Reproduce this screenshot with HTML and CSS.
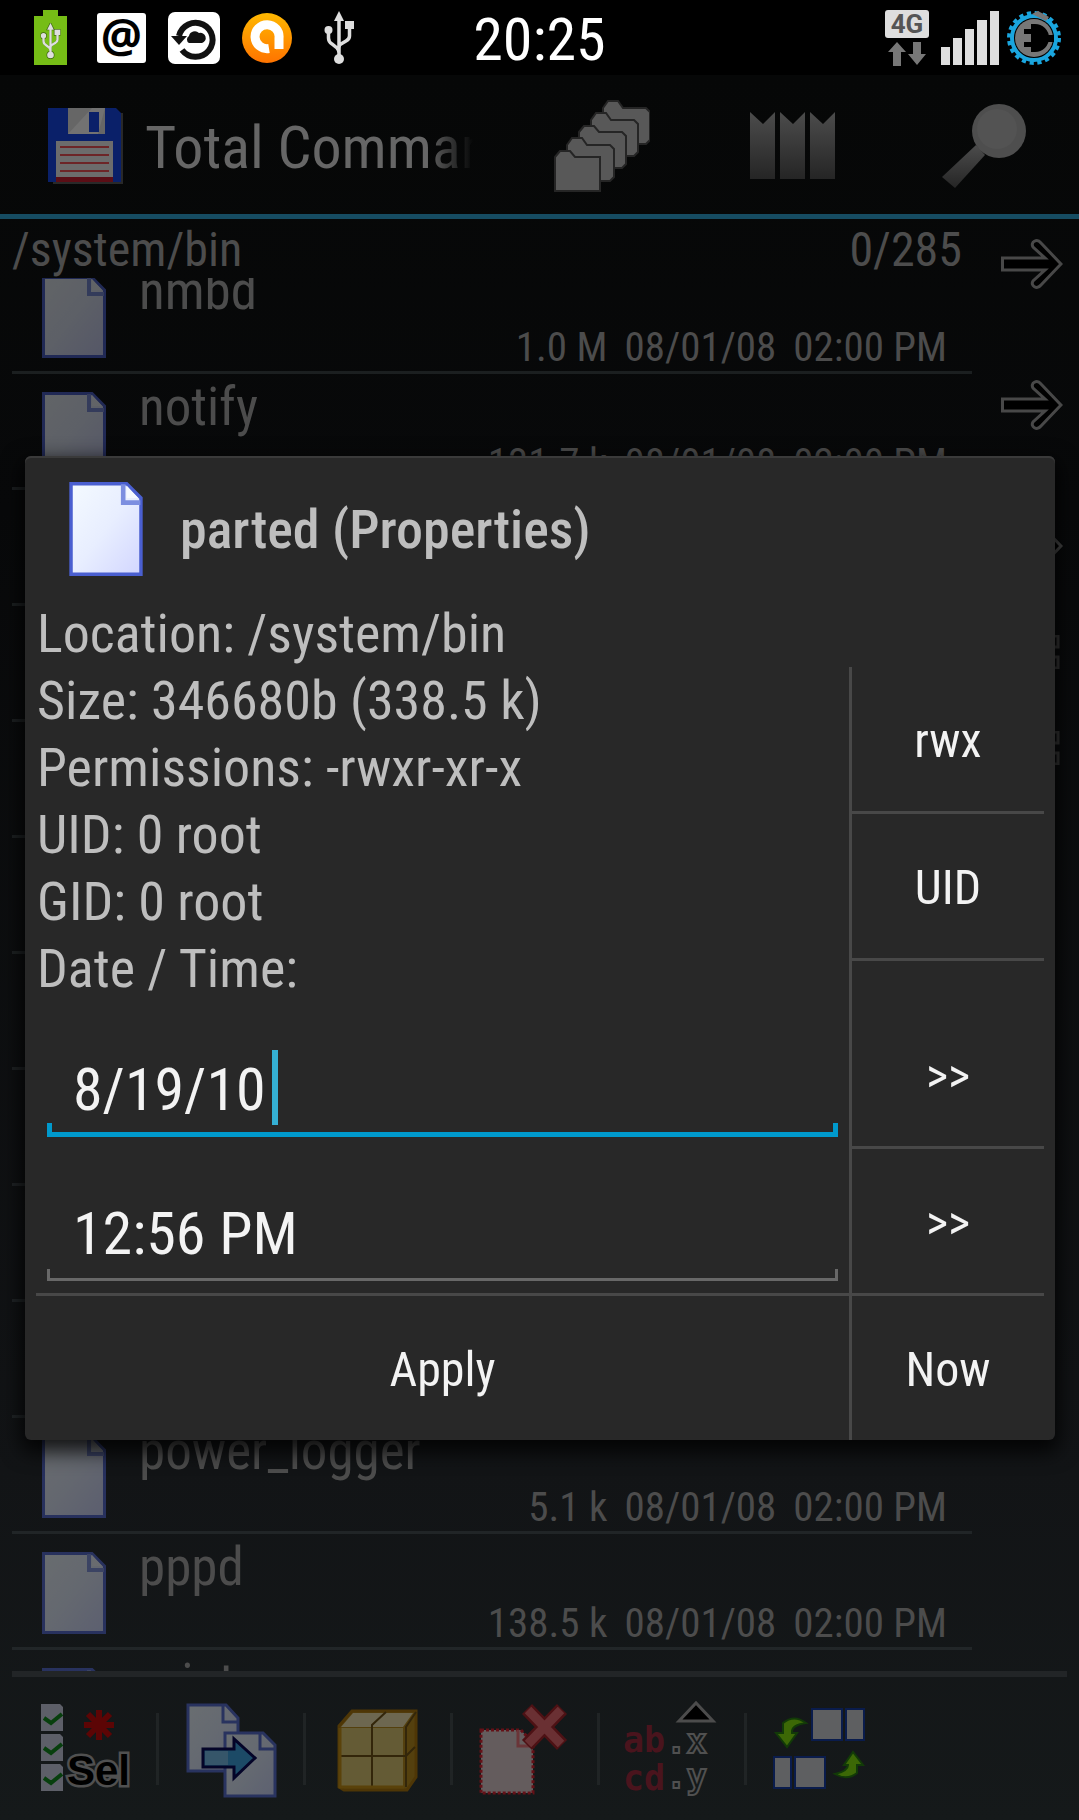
FILE: index.html
```html
<!DOCTYPE html>
<html lang="en">
<head>
    <meta charset="UTF-8">
    <meta name="viewport" content="width=device-width, initial-scale=1.0">
    <title>Total Commander</title>
    <link rel="stylesheet" href="styles.css">
</head>
<body>
    <svg class="defs" aria-hidden="true">
        <defs>
            <linearGradient id="paper" x1="0" y1="0" x2="1" y2="1">
                <stop offset="0" stop-color="#f4faff"/>
                <stop offset="0.5" stop-color="#e8eeff"/>
                <stop offset="1" stop-color="#d2d6ff"/>
            </linearGradient>
            <linearGradient id="metal" x1="0" y1="0" x2="0" y2="1">
                <stop offset="0" stop-color="#4c4c4c"/>
                <stop offset="1" stop-color="#252525"/>
            </linearGradient>
            <linearGradient id="avast" x1="0" y1="0" x2="0" y2="1">
                <stop offset="0" stop-color="#ffb800"/>
                <stop offset="1" stop-color="#ff7300"/>
            </linearGradient>
            <symbol id="file" viewBox="0 0 64 82">
                <path d="M1.5 1.5H50L62.500 14V80.500H1.500Z" fill="url(#paper)" stroke="#4a5fd0" stroke-width="3"/>
                <path d="M47 2V18H62" fill="none" stroke="#7c8ee0" stroke-width="4"/>
                <path d="M50 3V14H60Z" fill="#f4f8ff"/>
            </symbol>
            <symbol id="arrow" viewBox="0 0 62 50">
                <path d="M1.500 19H44L32 8C29 3 36-1 40 4L60 25L40 46C36 51 29 47 32 42L44 31H1.500Z" fill="#000" stroke="#484848" stroke-width="3"/>
            </symbol>
            <symbol id="usb" viewBox="0 0 30 54">
                <path d="M15 8V46M4.500 20V27Q4.500 31 8 33L13 37Q15 39 15 42M25.500 14V25Q25.500 28 22 30L17 33Q15 34 15 37" fill="none" stroke="currentColor" stroke-width="3.500"/>
                <path d="M15 0L20 10H10Z" fill="currentColor"/>
                <circle cx="4.500" cy="19" r="4" fill="currentColor"/>
                <rect x="21" y="10" width="9" height="8" fill="currentColor"/>
                <circle cx="15" cy="48" r="5" fill="currentColor"/>
            </symbol>
        </defs>
    </svg>

    <header class="status-bar">
        <div class="status-left">
            <svg class="battery" viewBox="0 0 33 55">
                <path d="M0 6H9V0H24V6H33V55H0Z" fill="#76bd16"/>
                <use href="#usb" x="6.500" y="13" width="20" height="36" color="#3c6410" stroke="#3c6410" stroke-width="2"/>
                <use href="#usb" x="6.500" y="13" width="20" height="36" color="#dedede"/>
            </svg>
            <div class="at-badge">@</div>
            <svg class="sync" viewBox="0 0 52 52">
                <rect width="52" height="52" rx="7" fill="#fff"/>
                <path d="M11 24A17 17 0 1 1 14 38" fill="none" stroke="#111" stroke-width="6"/>
                <path d="M3 24H19L11 33Z" fill="#111"/>
                <path d="M21 31A4 4 0 0 1 21 24A6 6 0 0 1 31 21A5 5 0 0 1 34 31Z" fill="#111"/>
            </svg>
            <svg class="avast" viewBox="0 0 50 50">
                <circle cx="25" cy="25" r="25" fill="url(#avast)"/>
                <path d="M27 35.500A12 12 0 1 1 37 25V36" fill="none" stroke="#fff" stroke-width="9"/>
            </svg>
            <svg class="usb" viewBox="0 0 30 54"><use href="#usb"/></svg>
        </div>
        <time class="clock">20:25</time>
        <div class="status-right">
            <div class="network">
                <span class="network-type">4G</span>
                <svg viewBox="0 0 38 24" width="38" height="24">
                    <path d="M9 0L18 10H13V24H5V10H0ZM29 23L20 12H25V0H33V12H38Z" fill="#777"/>
                </svg>
            </div>
            <svg class="signal" viewBox="0 0 58 54">
                <path d="M0 36H9V54H0ZM12 27H21V54H12ZM24 18H33V54H24ZM36 9H46V54H36ZM49 0H58V54H49Z" fill="#dedede"/>
            </svg>
            <svg class="gear" viewBox="0 0 54 54">
                <circle cx="27" cy="27" r="22" fill="none" stroke="#1aa5de" stroke-width="4"/>
                <circle cx="27" cy="27" r="25" fill="none" stroke="#1aa5de" stroke-width="4" stroke-dasharray="4.200 3.650"/>
                <path d="M25 3L31 0L42 6L39 10Z" fill="#777"/>
                <circle cx="27" cy="27" r="19" fill="#777"/>
                <path d="M24 13H28A14 14 0 0 1 28 41H24V36H17V31H24V23H17V18H24Z" fill="#000"/>
                <path d="M36 24H47V31H36Z" fill="#000"/>
            </svg>
        </div>
    </header>

    <div class="app">
        <div class="action-bar">
            <svg class="logo" viewBox="0 0 75 76">
                <path d="M5 5H75V76H5Z" fill="#292929"/>
                <path d="M0 0H68L73 5V74H0Z" fill="#0a2069"/>
                <path d="M20 0H57V26H20Z" fill="#666"/>
                <path d="M20 26L44 0H57L50 26Z" fill="#727272"/>
                <path d="M41 4H51V24H41Z" fill="#0a2069"/>
                <path d="M8 33H65V74H8Z" fill="#6c6c6c"/>
                <path d="M12 39H61M12 47H61M12 55H61M12 63H61" stroke="#6d2527" stroke-width="2"/>
                <path d="M8 69H65V74H8Z" fill="#5b0e16"/>
            </svg>
            <h1 class="app-title">Total Commander</h1>
            <button class="action" aria-label="Folders">
                <svg viewBox="0 0 96 92" width="96" height="92">
                    <g fill="#585858" stroke="#252525" stroke-width="2">
                        <path d="M49 8L54 1H64L69 8H92L96 12V40L92 44H49Z"/>
                        <path d="M37 20L42 13H52L57 20H80L84 24V52L80 56H37Z"/>
                        <path d="M25 32L30 26H40L45 32H68L72 36V64L68 68H25Z"/>
                        <path d="M13 45L18 38H28L33 45H56L60 49V77L56 81H13Z"/>
                        <path d="M1 57L6 51H16L21 57H46V91H1Z"/>
                    </g>
                </svg>
            </button>
            <button class="action" aria-label="Bookmarks">
                <svg viewBox="0 0 88 68" width="88" height="68">
                    <path d="M1 0L14 12L26 0V67H1ZM31 0L44 12L56 0V67H31ZM61 0L74 12L86 0V67H61Z" fill="url(#metal)"/>
                </svg>
            </button>
            <button class="action" aria-label="Search">
                <svg viewBox="0 0 86 86" width="86" height="86">
                    <path d="M35 42L44 52L14 85L1 74Z" fill="url(#metal)"/>
                    <circle cx="58" cy="28" r="27" fill="#4e4e4e"/>
                    <circle cx="56" cy="26" r="20" fill="#535353"/>
                </svg>
            </button>
        </div>

        <div class="browser">
            <main class="panel">
                <div class="path-bar"><span>/system/bin</span><span>0/285</span></div>
                <ul class="file-list">
                    <li class="file-row">
                        <svg class="file-icon"><use href="#file"/></svg>
                        <div class="file-text">
                            <div class="file-name">nmbd</div>
                            <div class="file-meta"><span>1.0 M</span><span>08/01/08</span><span>02:00 PM</span></div>
                        </div>
                    </li>
                    <li class="file-row">
                        <svg class="file-icon"><use href="#file"/></svg>
                        <div class="file-text">
                            <div class="file-name">notify</div>
                            <div class="file-meta"><span>131.7 k</span><span>08/01/08</span><span>02:00 PM</span></div>
                        </div>
                    </li>
                    <li class="file-row"></li>
                    <li class="file-row"></li>
                    <li class="file-row"></li>
                    <li class="file-row"></li>
                    <li class="file-row"></li>
                    <li class="file-row"></li>
                    <li class="file-row"></li>
                    <li class="file-row"></li>
                    <li class="file-row">
                        <svg class="file-icon"><use href="#file"/></svg>
                        <div class="file-text">
                            <div class="file-name">power_logger</div>
                            <div class="file-meta"><span>5.1 k</span><span>08/01/08</span><span>02:00 PM</span></div>
                        </div>
                    </li>
                    <li class="file-row">
                        <svg class="file-icon"><use href="#file"/></svg>
                        <div class="file-text">
                            <div class="file-name">pppd</div>
                            <div class="file-meta"><span>138.5 k</span><span>08/01/08</span><span>02:00 PM</span></div>
                        </div>
                    </li>
                    <li class="file-row">
                        <svg class="file-icon"><use href="#file"/></svg>
                        <div class="file-text">
                            <div class="file-name">print</div>
                        </div>
                    </li>
                </ul>
            </main>
            <nav class="side-bar">
                <button class="side-button" aria-label="Right panel"><svg class="side-arrow"><use href="#arrow"/></svg></button>
                <button class="side-button" aria-label="Copy right"><svg class="side-arrow"><use href="#arrow"/></svg></button>
                <button class="side-button" aria-label="Move right"><svg class="side-arrow"><use href="#arrow"/></svg></button>
                <div class="side-group">
                    <button class="side-button small" aria-label="List"><svg viewBox="0 0 56 34" width="56" height="34"><path d="M1 1H54V12H1ZM1 22H54V33H1Z" fill="none" stroke="#363636" stroke-width="3"/></svg></button>
                    <button class="side-button small" aria-label="Details"><svg viewBox="0 0 56 34" width="56" height="34"><path d="M1 1H54V12H1ZM1 22H54V33H1Z" fill="none" stroke="#363636" stroke-width="3"/></svg></button>
                </div>
            </nav>
        </div>

        <div class="toolbar">
            <button class="tool" aria-label="Select">
                <svg viewBox="0 0 96 96">
                    <g fill="#5d5f68">
                        <path d="M5 3H24L27 6V30H5ZM5 33H24L27 36V60H5ZM5 63H24L27 66V90H5Z"/>
                    </g>
                    <path d="M8 17L15 22L26 13M8 47L15 52L26 43M8 77L15 82L26 73" fill="none" stroke="#073f0d" stroke-width="4"/>
                    <path d="M63 9V39M48 24H78M52 13L74 35M74 13L52 35" stroke="#5c0505" stroke-width="6"/>
                    <text class="sel-text" x="31" y="84">Sel</text>
                </svg>
            </button>
            <button class="tool" aria-label="Copy">
                <svg viewBox="0 0 96 96">
                    <g opacity="0.38">
                        <path d="M5 4H43L55 17V70H5Z" fill="url(#paper)" stroke="#4a5fd0" stroke-width="3"/>
                        <path d="M40 4V21H54" fill="none" stroke="#4a5fd0" stroke-width="3"/>
                        <path d="M42 32H80L92 44V95H42Z" fill="url(#paper)" stroke="#4a5fd0" stroke-width="3"/>
                        <path d="M77 32V48H91" fill="none" stroke="#4a5fd0" stroke-width="3"/>
                    </g>
                    <path d="M20 48H51V38L72 57L51 77V66H20Z" fill="#1c4a66" stroke="#040428" stroke-width="3"/>
                    <path d="M22 50H45V64H22Z" fill="#36566a"/>
                </svg>
            </button>
            <button class="tool" aria-label="Pack">
                <svg viewBox="0 0 96 96">
                    <path d="M9 25L22 10H86V76L77 89H14L9 86Z" fill="#54400e" stroke="#4e3606" stroke-width="3"/>
                    <path d="M11 26L23 12H83L73 26Z" fill="#6d6750"/>
                    <path d="M10 27H73V86H10Z" fill="#645b35"/>
                    <path d="M42 87V24L56 11M9 55H76L85 46M76 86V26L86 11" fill="none" stroke="#33260a" stroke-width="2"/>
                    <path d="M10 27V86H74" fill="none" stroke="#5a420a" stroke-width="3"/>
                </svg>
            </button>
            <button class="tool" aria-label="Delete">
                <svg viewBox="0 0 96 96">
                    <path d="M4 29H44L56 42V92H4Z" fill="#645c5d" stroke="#641017" stroke-width="3" stroke-dasharray="3 2"/>
                    <path d="M41 29V45H56" fill="none" stroke="#6a3538" stroke-width="3"/>
                    <path d="M50 8L85 44M85 8L50 44" stroke="#4d1114" stroke-width="14"/>
                    <path d="M51 9L84 43M84 9L51 43" stroke="#6a3033" stroke-width="9"/>
                </svg>
            </button>
            <button class="tool" aria-label="Rename">
                <svg viewBox="0 0 96 96">
                    <path d="M55 20L72 2L89 20Z" fill="#000" stroke="#4c4c4c" stroke-width="3"/>
                    <text class="rename-text" x="-1" y="51">ab</text>
                    <text class="rename-text" x="-1" y="89">cd</text>
                    <text class="rename-ext" x="42" y="52">.x</text>
                    <text class="rename-ext" x="42" y="87">.y</text>
                </svg>
            </button>
            <button class="tool" aria-label="Swap panels">
                <svg viewBox="0 0 96 96">
                    <path d="M41 8H71V39H41ZM75 8H93V39H75ZM3 56H20V87H3ZM24 56H54V87H24Z" fill="#5e5f61" stroke="#0a1c4c" stroke-width="2"/>
                    <path d="M35 22Q23 13 12 22V32H5L16 46L26 32H21Q20 24 35 22Z" fill="#3c6806" stroke="#123a08" stroke-width="2"/>
                    <path d="M64 73Q76 80 86 72V64H92L82 51L73 64H77Q77 70 64 73Z" fill="#3c6806" stroke="#123a08" stroke-width="2"/>
                </svg>
            </button>
        </div>
    </div>

    <div class="overlay">
        <form class="dialog" role="dialog" aria-labelledby="dialog-title">
            <div class="dialog-header">
                <svg class="dialog-icon"><use href="#file"/></svg>
                <h2 id="dialog-title">parted (Properties)</h2>
            </div>
            <p class="info">Location: /system/bin</p>
            <div class="dialog-body">
                <div class="dialog-main">
                    <p class="info">Size: 346680b (338.5 k)</p>
                    <p class="info">Permissions: -rwxr-xr-x</p>
                    <p class="info">UID: 0 root</p>
                    <p class="info">GID: 0 root</p>
                    <label class="info" for="date">Date / Time:</label>
                    <div class="field active">
                        <input type="text" id="date" value="8/19/10">
                        <span class="caret"></span>
                    </div>
                    <div class="field">
                        <input type="text" id="time" aria-label="Time" value="12:56 PM">
                    </div>
                </div>
                <div class="dialog-side">
                    <button type="button">rwx</button>
                    <button type="button">UID</button>
                    <button type="button" class="tall">&gt;&gt;</button>
                    <button type="button">&gt;&gt;</button>
                </div>
            </div>
            <div class="dialog-footer">
                <button type="button" class="apply">Apply</button>
                <button type="button" class="now">Now</button>
            </div>
        </form>
    </div>
</body>
</html>
```

FILE: styles.css
```css
* {
    box-sizing: border-box;
}

body {
    margin: 0;
    height: 100vh;
    display: flex;
    flex-direction: column;
    overflow: hidden;
    background-color: #000;
    color: #4c4c4c;
    font-family: "Roboto Condensed", Roboto, sans-serif;
}

h1, h2, p, ul {
    margin: 0;
    padding: 0;
    font-weight: 400;
}

button {
    margin: 0;
    padding: 0;
    border: none;
    background: none;
    color: inherit;
    font-family: inherit;
    cursor: pointer;
}

svg {
    display: block;
    flex: none;
}

.defs {
    position: absolute;
    width: 0;
    height: 0;
}

/* status bar */
.status-bar {
    flex: none;
    height: 75px;
    display: grid;
    grid-template-columns: 1fr auto 1fr;
    align-items: center;
    padding: 0 18px;
}

.status-left,
.status-right {
    display: flex;
    align-items: center;
}

.status-left {
    gap: 22px;
    padding-left: 16px;
}

.status-right {
    justify-content: flex-end;
    gap: 8px;
}

.battery {
    width: 33px;
    height: 55px;
    margin-right: 8px;
}

.at-badge {
    width: 49px;
    height: 50px;
    border-radius: 3px;
    background-color: #fff;
    color: #000;
    font: 700 46px/42px "Open Sans", sans-serif;
    text-align: center;
}

.sync {
    width: 52px;
    height: 52px;
}

.avast {
    width: 50px;
    height: 50px;
}

.usb {
    width: 30px;
    height: 54px;
    margin-left: 10px;
    color: #dedede;
}

.clock {
    padding-top: 4px;
    color: #fff;
    font-size: 60px;
    line-height: 70px;
}

.network {
    display: flex;
    flex-direction: column;
    align-items: center;
    gap: 4px;
    margin-right: 4px;
}

.network-type {
    width: 44px;
    height: 28px;
    border-radius: 3px;
    background-color: #dedede;
    color: #555;
    font: 700 26px/28px Roboto, sans-serif;
    text-align: center;
}

.signal {
    width: 58px;
    height: 54px;
}

.gear {
    width: 54px;
    height: 54px;
}

/* file manager behind the dialog */
.app {
    flex: 1;
    min-height: 0;
    display: flex;
    flex-direction: column;
    background: linear-gradient(#060707, #08090a 25%, #121416 80%, #15191a);
}

.action-bar {
    flex: none;
    height: 144px;
    display: flex;
    align-items: center;
    padding: 2px 0 0 48px;
    border-bottom: 5px solid #164c62;
}

.logo {
    width: 75px;
    height: 76px;
}

.app-title {
    flex: 1;
    min-width: 0;
    margin: 0 26px 0 22px;
    padding-top: 5px;
    overflow: hidden;
    white-space: nowrap;
    color: #666;
    font-size: 60px;
    line-height: 72px;
    -webkit-mask-image: linear-gradient(90deg, #000 84%, transparent 98%);
    mask-image: linear-gradient(90deg, #000 84%, transparent 98%);
}

.action {
    flex: none;
    width: 191px;
    height: 100%;
    display: flex;
    align-items: center;
    justify-content: center;
}

.browser {
    flex: 1;
    min-height: 0;
    display: flex;
    margin: 0 12px;
    border-bottom: 6px solid #222527;
}

.panel {
    flex: 1;
    min-width: 0;
    display: flex;
    flex-direction: column;
}

.path-bar {
    flex: none;
    height: 59px;
    display: flex;
    justify-content: space-between;
    padding-right: 10px;
    font-size: 48px;
    line-height: 62px;
}

.file-list {
    flex: 1;
    min-height: 0;
    overflow: hidden;
    list-style: none;
}

/* list is scrolled a little into its first row */
.file-row:first-child {
    margin-top: -20px;
}

.file-row {
    height: 116px;
    display: flex;
    gap: 33px;
    padding-left: 30px;
    border-bottom: 3px solid rgba(48, 54, 56, 0.5);
}

.file-icon {
    width: 64px;
    height: 82px;
    margin-top: 18px;
    opacity: 0.38;
}

.file-text {
    flex: 1;
    display: flex;
    flex-direction: column;
    justify-content: space-between;
    padding: 5px 25px 4px 0;
}

.file-name {
    font-size: 53px;
    line-height: 56px;
}

.file-meta {
    display: flex;
    justify-content: flex-end;
    gap: 17px;
    font-size: 41px;
    line-height: 40px;
}

.side-bar {
    flex: none;
    width: 95px;
}

.side-button {
    width: 100%;
    height: 141px;
    display: flex;
    align-items: center;
    justify-content: center;
    padding-left: 24px;
}

.side-button:first-child {
    height: 90px;
    margin-bottom: 25px;
}

.side-group {
    margin-top: -12px;
}

.side-group .small {
    height: 96px;
    margin-bottom: 0;
}

.side-arrow {
    width: 62px;
    height: 50px;
}

.toolbar {
    flex: none;
    height: 143px;
    display: flex;
    align-items: center;
    padding-left: 12px;
}

.tool {
    width: 147px;
    height: 72px;
    display: flex;
    align-items: center;
    justify-content: center;
    border-right: 3px solid #202425;
}

.tool:last-child {
    border-right-color: transparent;
}

.tool svg {
    width: 96px;
    height: 96px;
    overflow: visible;
}

.sel-text {
    font: 700 42px "Liberation Sans", sans-serif;
    fill: #000;
    stroke: #505050;
    stroke-width: 5px;
    paint-order: stroke;
}

.rename-text {
    font: 700 35px "DejaVu Sans Mono", monospace;
    fill: #4a141d;
}

.rename-ext {
    font: 700 34px "DejaVu Sans Mono", monospace;
    fill: #15191a;
    stroke: #505050;
    stroke-width: 2px;
}

/* properties dialog */
.overlay {
    position: fixed;
    top: 75px;
    right: 0;
    bottom: 0;
    left: 0;
    display: flex;
    align-items: center;
    padding: 0 24px 0 25px;
}

.dialog {
    flex: 1;
    padding: 0 11px;
    border-radius: 6px;
    background-color: #282828;
    color: #bebebe;
    box-shadow: inset 0 2px 0 #3a3a3a, 0 8px 20px 4px rgba(0, 0, 0, 0.8);
    font-size: 54px;
}

.dialog-header {
    height: 144px;
    display: flex;
    align-items: center;
    gap: 37px;
    padding: 3px 0 0 33px;
}

.dialog-header h2 {
    font-size: 54px;
    font-weight: 500;
}

.dialog-icon {
    width: 74px;
    height: 94px;
}

.info {
    display: block;
    padding-left: 1px;
    line-height: 67px;
}

.dialog-body {
    display: flex;
}

.dialog-main {
    flex: 1;
    display: flex;
    flex-direction: column;
}

.field {
    position: relative;
    height: 144px;
    display: flex;
    align-items: flex-end;
    padding: 0 11px 12px;
}

.active {
    margin-top: 3px;
}

.field input {
    width: 100%;
    height: 98px;
    padding: 3px 26px 0;
    border: none;
    outline: none;
    color: #f3f3f3;
    font-family: inherit;
    font-size: 60px;
    background:
        linear-gradient(#686868, #686868) left bottom / 3px 12px no-repeat,
        linear-gradient(#686868, #686868) right bottom / 3px 12px no-repeat,
        linear-gradient(#686868, #686868) left bottom / 100% 3px no-repeat;
}

.field.active input {
    background:
        linear-gradient(#0099cc, #0099cc) left bottom / 5px 14px no-repeat,
        linear-gradient(#0099cc, #0099cc) right bottom / 5px 14px no-repeat,
        linear-gradient(#0099cc, #0099cc) left bottom / 100% 5px no-repeat;
}

.caret {
    position: absolute;
    left: 236px;
    bottom: 24px;
    width: 6px;
    height: 75px;
    background-color: #35b0d4;
}

.dialog-side {
    width: 195px;
    display: flex;
    flex-direction: column;
    border-left: 3px solid #484848;
}

.dialog-side button {
    height: 147px;
    padding-top: 3px;
    border-bottom: 3px solid #484848;
    color: #f3f3f3;
    font-size: 48px;
}

.dialog-side .tall {
    height: 188px;
    padding-top: 44px;
}

.dialog-side button:last-child {
    height: 144px;
    border-bottom: none;
}

.dialog-footer {
    display: flex;
    border-top: 3px solid #484848;
}

.dialog-footer button {
    height: 144px;
    padding-top: 3px;
    color: #f3f3f3;
    font-size: 48px;
}

.dialog-footer .apply {
    flex: 1;
}

.dialog-footer .now {
    width: 195px;
    border-left: 3px solid #484848;
}
```
